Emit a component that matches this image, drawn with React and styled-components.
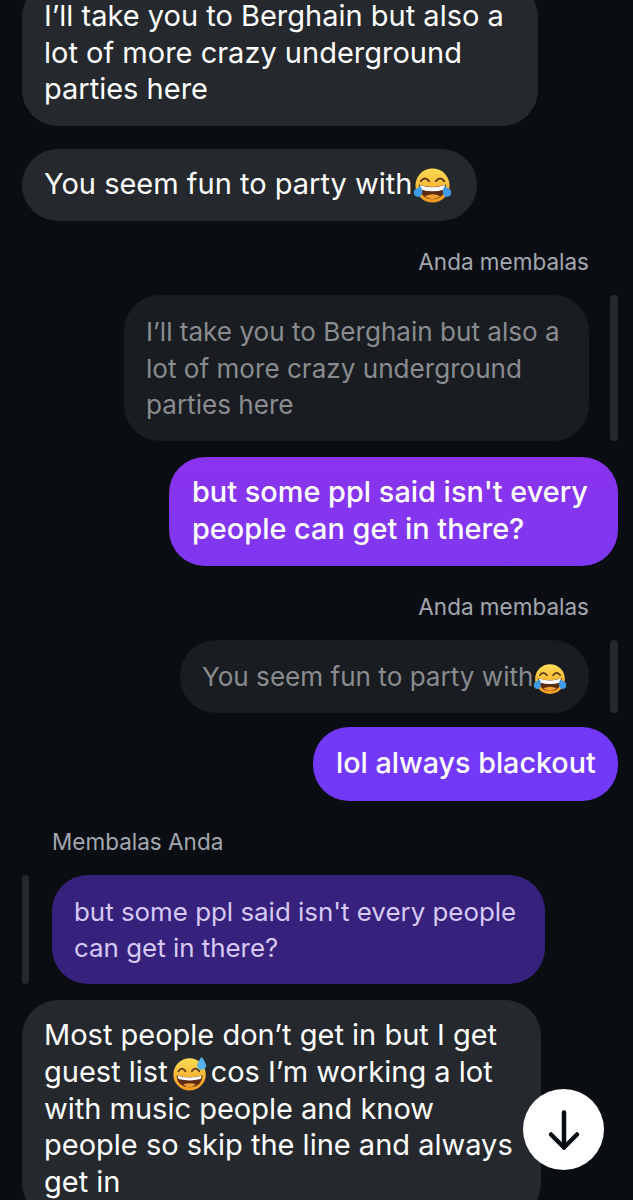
import React from "react";
import styled, { createGlobalStyle } from "styled-components";

const Global = createGlobalStyle`
  html, body { margin: 0; padding: 0; background: #0a0e12; }
  * { box-sizing: border-box; }
`;

const Screen = styled.main`
  width: 633px;
  height: 1200px;
  overflow: hidden;
  background: #0a0e12;
  font-family: Inter, "Liberation Sans", sans-serif;
  color: #fff;
`;

const Thread = styled.div`
  display: flex;
  flex-direction: column;
  margin-top: -19px;
  padding: 0 15px 0 22px;
`;

const Incoming = styled.div`
  align-self: flex-start;
  width: ${(p) => p.$width}px;
  margin-top: ${(p) => p.$top || 0}px;
  padding: 17px 20px 18.4px 22px;
  background: #25292e;
  border-radius: 36px;
  font-size: 29px;
  line-height: 36.6px;
`;

const Label = styled.div`
  align-self: ${(p) => (p.$left ? "flex-start" : "flex-end")};
  margin: ${(p) => p.$top}px ${(p) => (p.$left ? 0 : 29)}px 0 ${(p) => (p.$left ? 30 : 0)}px;
  font-size: 22.5px;
  line-height: 26px;
  color: #a3a8b0;
`;

const QuoteRow = styled.div`
  display: flex;
  justify-content: ${(p) => (p.$left ? "flex-start" : "flex-end")};
  gap: ${(p) => (p.$left ? 23 : 21)}px;
  margin-top: ${(p) => p.$top}px;
`;

const QuoteBar = styled.div`
  flex: none;
  width: ${(p) => (p.$left ? 7 : 8)}px;
  border-radius: 4px;
  background: #25292e;
`;

const Quote = styled.div`
  width: ${(p) => p.$width}px;
  padding: 19px 12px 17.4px 22px;
  border-radius: 36px;
  background: ${(p) => (p.$left ? "#36217c" : "#191c20")};
  color: ${(p) => (p.$left ? "#d6c9f6" : "#8a8c90")};
  font-size: ${(p) => (p.$left ? 25.9 : 26.1)}px;
  line-height: 36.6px;
`;

const Outgoing = styled.div`
  align-self: flex-end;
  width: ${(p) => p.$width}px;
  margin-top: ${(p) => p.$top}px;
  padding: ${(p) => (p.$tall ? "18px 12px 19.4px 23px" : "17px 12px 18.4px 23px")};
  background: ${(p) => p.$bg};
  border-radius: 36px;
  font-size: ${(p) => (p.$tall ? 28.7 : 28.9)}px;
  line-height: 36.6px;
  font-weight: 500;
`;

const EmojiSvg = styled.svg`
  display: inline-block;
  width: ${(p) => p.$size}px;
  height: ${(p) => p.$size}px;
  vertical-align: ${(p) => p.$drop}px;
  margin: -8px ${(p) => p.$after || 0}px -8px ${(p) => p.$before || 0}px;
`;

const ScrollButton = styled.button`
  position: fixed;
  left: 523px;
  top: 1089px;
  width: 81px;
  height: 81px;
  padding: 0;
  border: none;
  border-radius: 50%;
  background: #fff;
  display: flex;
  align-items: center;
  justify-content: center;
`;

const FaceGradients = ({ id }) => (
  <defs>
    <linearGradient id={id} x1="0" y1="0" x2="0" y2="1">
      <stop offset="0" stopColor="#ffdc55" />
      <stop offset="1" stopColor="#f59a1e" />
    </linearGradient>
  </defs>
);

const LaughCry = ({ size = 39, drop = -3, before = 1 }) => (
  <EmojiSvg $size={size} $drop={drop} $before={before} viewBox="0 0 40 40" aria-label="😂">
    <FaceGradients id="laugh" />
    <circle cx="20" cy="20" r="17.5" fill="url(#laugh)" />
    <path d="M8 15.5 Q12 10 16.5 15.5M23.5 15.5 Q28 10 32 15.5" fill="none" stroke="#5c3a1a" strokeWidth="2" strokeLinecap="round" />
    <path d="M6 19 Q20 24 34 19 Q33 34 20 34 Q7 34 6 19Z" fill="#5b2c12" />
    <path d="M7 19.5 Q20 24 33 19.5 L32 24 Q20 28 8 24Z" fill="#fff" />
    <path d="M12 31 Q20 27 28 31 Q24 34 20 34 Q16 34 12 31Z" fill="#f0a030" />
    <path d="M1 25 Q6 21 8 21 Q11 27 8 31 Q3 33 1 29Z" fill="#3f9ae8" />
    <path d="M39 25 Q34 21 32 21 Q29 27 32 31 Q37 33 39 29Z" fill="#3f9ae8" />
  </EmojiSvg>
);

const SweatSmile = () => (
  <EmojiSvg $size={37} $drop={-2} $before={4} $after={2} viewBox="0 0 40 40" aria-label="😅">
    <FaceGradients id="sweat" />
    <circle cx="19" cy="21" r="17.5" fill="url(#sweat)" />
    <path d="M7 17.5 Q11 12 14.5 17.5M21.5 17.5 Q25 12 29.5 17.5" fill="none" stroke="#5c3a1a" strokeWidth="2" strokeLinecap="round" />
    <path d="M5 22 Q19 26 33 22 Q32 35 19 35 Q6 35 5 22Z" fill="#5b2c12" />
    <path d="M6 22.5 Q19 26 32 22.5 L31 26 Q19 29 7 26Z" fill="#fff" />
    <path d="M12 32 Q19 29 26 32 Q22 35 19 35 Q16 35 12 32Z" fill="#f0a030" />
    <path d="M32 2 Q37 9 37 12 Q36 16 32 16 Q28 16 27 12 Q27 9 32 2Z" fill="#55b4ee" />
  </EmojiSvg>
);

export default function App() {
  return (
    <Screen>
      <Global />
      <Thread>
        <Incoming $width={516}>
          I’ll take you to Berghain but also a lot of more crazy underground parties here
        </Incoming>
        <Incoming $width={455} $top={23}>
          You seem fun to party with
          <LaughCry />
        </Incoming>

        <Label $top={28}>Anda membalas</Label>
        <QuoteRow $top={20}>
          <Quote $width={465}>
            I’ll take you to Berghain but also a lot of more crazy underground parties here
          </Quote>
          <QuoteBar />
        </QuoteRow>
        <Outgoing $width={449} $top={16} $bg="linear-gradient(#8a33ee, #7f37f1)">
          but some ppl said isn't every people can get in there?
        </Outgoing>

        <Label $top={28}>Anda membalas</Label>
        <QuoteRow $top={20}>
          <Quote $width={409}>
            You seem fun to party with
            <LaughCry size={34} drop={-2} before={0} />
          </Quote>
          <QuoteBar />
        </QuoteRow>
        <Outgoing $tall $width={305} $top={14} $bg="#723af8">
          lol always blackout
        </Outgoing>

        <Label $left $top={28}>Membalas Anda</Label>
        <QuoteRow $left $top={20}>
          <QuoteBar $left />
          <Quote $left $width={493}>
            but some ppl said isn't every people can get in there?
          </Quote>
        </QuoteRow>
        <Incoming $width={519} $top={16}>
          Most people don’t get in but I get guest list
          <SweatSmile />
          cos I’m working a lot with music people and know people so skip the line and always get in
        </Incoming>
      </Thread>

      <ScrollButton aria-label="Scroll to latest">
        <svg width="40" height="44" viewBox="0 0 40 44" fill="none" stroke="#0a0e12" strokeWidth="4.5" strokeLinecap="round" strokeLinejoin="round">
          <path d="M20 4.5V39.5" />
          <path d="M7 26.5L20 39.5L33 26.5" />
        </svg>
      </ScrollButton>
    </Screen>
  );
}
